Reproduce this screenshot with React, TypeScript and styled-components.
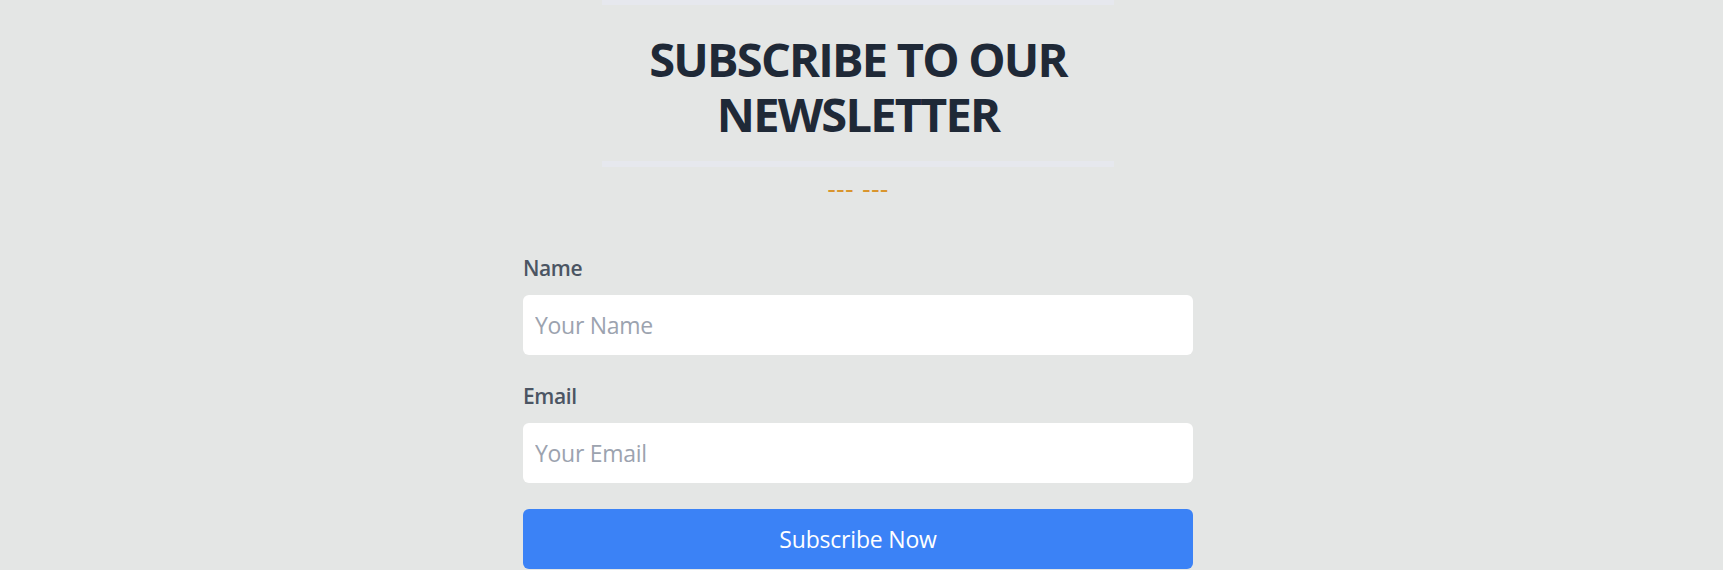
import React from "react";
import styled, { createGlobalStyle } from "styled-components";

const GlobalStyle = createGlobalStyle`
  html, body {
    margin: 0;
    padding: 0;
    background: #e4e6e5;
  }
  body {
    font-family: "Open Sans", "Noto Sans", "Liberation Sans", sans-serif;
  }
  * { box-sizing: border-box; }
`;

const Page = styled.main`
  display: flex;
  flex-direction: column;
  align-items: center;
  padding: 0 7px 0 0;
  min-height: 570px;
`;

const HeaderBlock = styled.header`
  width: 512px;
  border-top: 5px solid #e6e8ee;
  border-bottom: 6px solid #e6e8ee;
  padding: 27px 0 19px;
  text-align: center;
`;

const Title = styled.h1`
  margin: 0;
  font-size: 47px;
  line-height: 55px;
  font-weight: 700;
  color: #1f2937;
  letter-spacing: -1.8px;
`;

const Divider = styled.div`
  margin-top: 7px;
  font-family: "DejaVu Sans", "Open Sans", sans-serif;
  font-size: 24px;
  line-height: 32px;
  letter-spacing: 0.3px;
  color: #d9952e;
  text-align: center;
`;

const Form = styled.form`
  width: 670px;
  margin-top: 47px;
  display: flex;
  flex-direction: column;
`;

const Field = styled.div`
  display: flex;
  flex-direction: column;
  margin-bottom: 26px;
`;

const Label = styled.label`
  font-size: 21px;
  line-height: 28px;
  font-weight: 600;
  letter-spacing: -0.4px;
  color: #4b5563;
  padding-top: 1px;
  margin-bottom: 13px;
`;

const Input = styled.input`
  height: 60px;
  width: 100%;
  border: none;
  border-radius: 6px;
  background: #ffffff;
  padding: 0 12px;
  font-family: inherit;
  font-size: 23px;
  letter-spacing: -0.3px;
  color: #1f2937;
  outline: none;
  &::placeholder {
    color: #9ca3af;
  }
`;

const Button = styled.button`
  height: 60px;
  width: 100%;
  border: none;
  border-radius: 6px;
  background: #3b82f6;
  color: #ffffff;
  font-family: inherit;
  font-size: 23px;
  letter-spacing: -0.2px;
  font-weight: 400;
  cursor: pointer;
`;

export default function App() {
  return (
    <>
      <GlobalStyle />
      <Page>
        <HeaderBlock>
          <Title>
            SUBSCRIBE TO OUR
            <br />
            NEWSLETTER
          </Title>
        </HeaderBlock>
        <Divider>--- ---</Divider>
        <Form onSubmit={(e) => e.preventDefault()}>
          <Field>
            <Label htmlFor="name">Name</Label>
            <Input id="name" type="text" placeholder="Your Name" />
          </Field>
          <Field>
            <Label htmlFor="email">Email</Label>
            <Input id="email" type="email" placeholder="Your Email" />
          </Field>
          <Button type="submit">Subscribe Now</Button>
        </Form>
      </Page>
    </>
  );
}
